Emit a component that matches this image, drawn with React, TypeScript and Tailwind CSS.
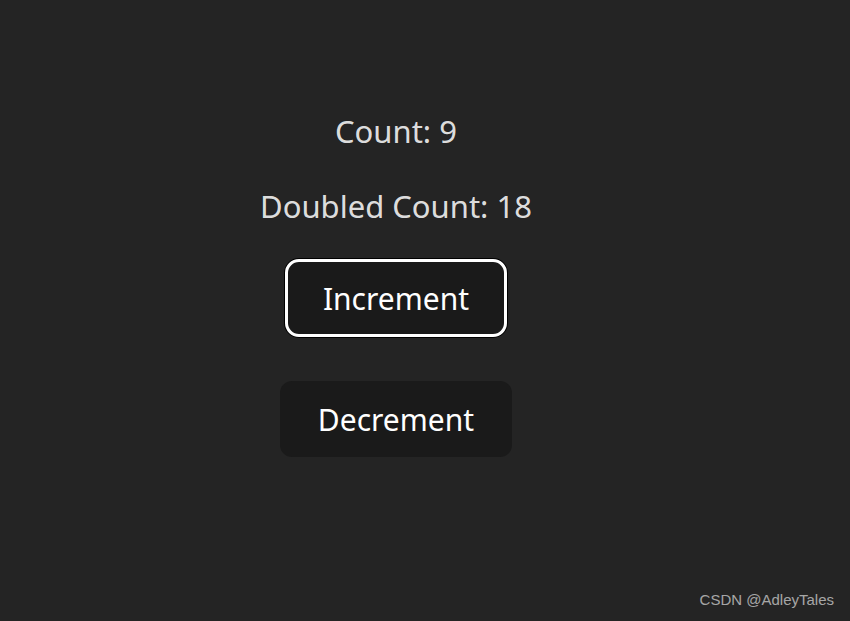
export default function App() {
  return (
    <div className="relative h-[621px] w-[850px] overflow-hidden bg-[#242424] font-['Noto_Sans',sans-serif] text-[31px] text-white/[0.87]">
      <div className="flex w-[792px] flex-col items-center pt-[107px]">
        <p className="leading-[48px]">Count: 9</p>
        <p className="mt-[27px] leading-[48px]">Doubled Count: 18</p>
        <button className="mt-[29px] h-[78px] w-[222px] rounded-[14px] border-[3px] border-white bg-[#1a1a1a] text-[30px] text-white shadow-[0_0_0_1px_#000]">
          Increment
        </button>
        <button className="mt-[44px] h-[76px] w-[232px] rounded-[12px] bg-[#1a1a1a] text-[30px] text-white">
          Decrement
        </button>
      </div>
      <span className="absolute bottom-[10px] right-[16px] font-['Liberation_Sans',sans-serif] text-[15px] text-white/60">
        CSDN @AdleyTales
      </span>
    </div>
  );
}
